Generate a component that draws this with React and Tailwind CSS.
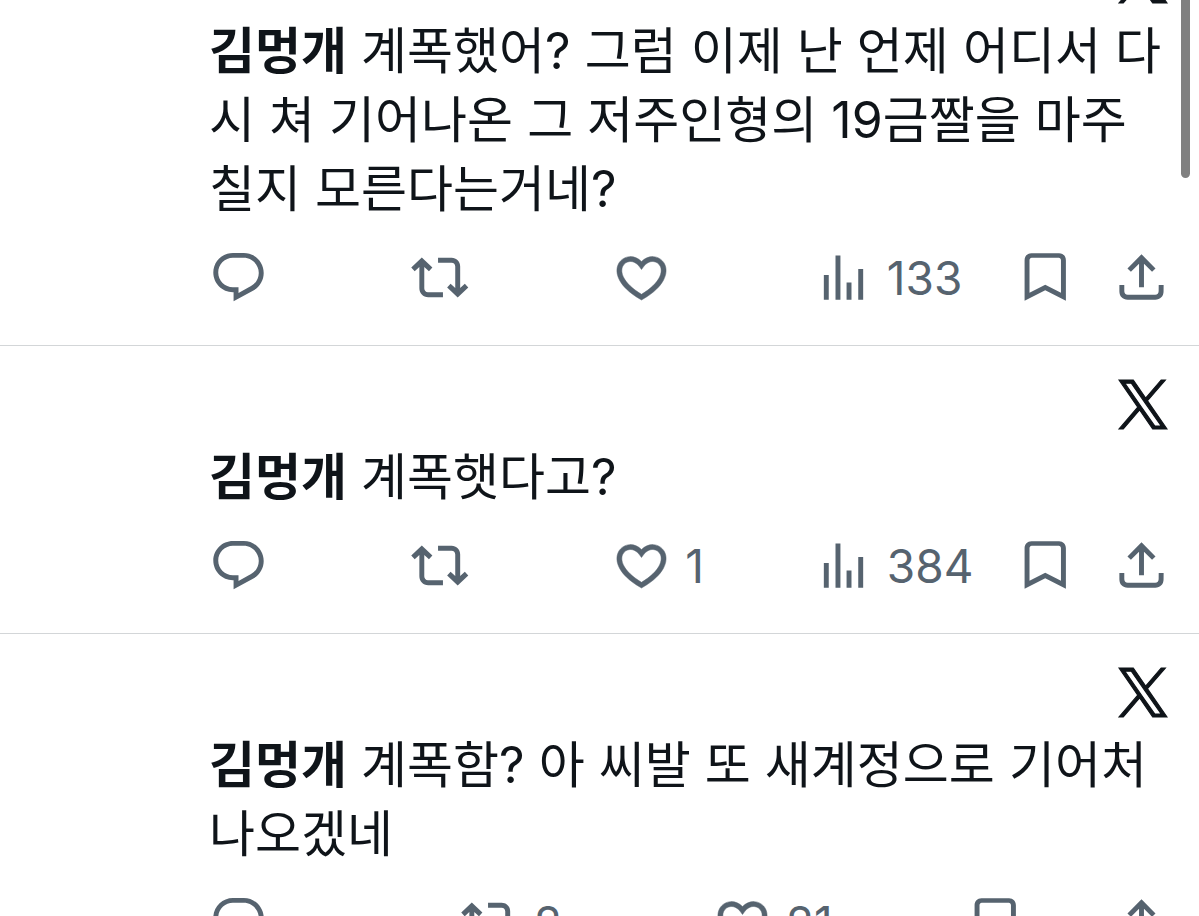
// Thread view -- list of posts with their action bars
import React from "react";

const ICONS = {
  reply: "M1.751 10c0-4.42 3.584-8 8.005-8h4.366c4.49 0 8.129 3.64 8.129 8.13 0 2.96-1.607 5.68-4.196 7.11l-8.054 4.46v-3.69h-.067c-4.49.1-8.183-3.51-8.183-8.01zm8.005-6c-3.317 0-6.005 2.69-6.005 6 0 3.37 2.77 6.08 6.138 6.01l.351-.01h1.761v2.3l5.087-2.81c1.951-1.08 3.163-3.13 3.163-5.36 0-3.39-2.744-6.13-6.129-6.13H9.756z",
  repost: "M4.4 3.88l4.3 4.1-1.4 1.5L5.4 7.7V16.4c0 .9.6 1.6 1.5 1.6H13v2H7c-2.1 0-3.6-1.5-3.6-3.6V7.7L1.5 9.48.1 7.98 4.4 3.88zM16.5 6H11V4h5.5c2 0 3.5 1.5 3.5 3.5v8.8l1.9-1.75 1.4 1.5-4.3 4.1-4.3-4.1 1.4-1.5 1.9 1.75V7.5c0-.9-.6-1.5-1.5-1.5z",
  like: "M16.697 5.5c-1.222-.06-2.679.51-3.89 2.16l-.805 1.09-.806-1.09C9.984 6.01 8.526 5.44 7.304 5.5c-1.243.07-2.349.78-2.91 1.91-.552 1.12-.633 2.78.479 4.82 1.074 1.97 3.257 4.27 7.129 6.61 3.87-2.34 6.052-4.64 7.126-6.61 1.111-2.04 1.03-3.7.477-4.82-.561-1.13-1.666-1.84-2.908-1.91zm4.187 7.69c-1.351 2.48-4.001 5.12-8.379 7.67l-.503.3-.504-.3c-4.379-2.55-7.029-5.19-8.382-7.67-1.36-2.5-1.41-4.86-.514-6.67.887-1.79 2.647-2.91 4.601-3.01 1.651-.09 3.368.56 4.798 2.01 1.429-1.45 3.146-2.1 4.796-2.01 1.954.1 3.714 1.22 4.601 3.01.896 1.81.846 4.17-.514 6.67z",
  views: "M8.75 21V3h2v18h-2zM18 21V8.5h2V21h-2zM4 21l.004-10h2L6 21H4zm9.248 0v-7h2v7h-2z",
  bookmark: "M3.9 21.5V5c0-1.7 1.1-2.9 2.8-2.9h11.2c1.7 0 2.8 1.2 2.8 2.9v16.5l-8.4-4.3-8.4 4.3zM5.9 18.2l6.4-3.3 6.4 3.3V5c0-.6-.4-1-.9-1H6.8c-.5 0-.9.4-.9 1v13.2z",
  share: "M12 2.59l5.7 5.7-1.41 1.42L13 6.41V16h-2V6.41l-3.3 3.3-1.41-1.42L12 2.59zM21 15l-.02 2.6c0 2.1-1.32 3.4-3.4 3.4H6.4C4.31 21 3 19.7 3 17.6V15h2v2.5c0 .9.5 1.5 1.4 1.5h11.18c.9 0 1.4-.6 1.4-1.5L19 15h2z",
};

const posts = [
  { id: 1, text: "계폭했어? 그럼 이제 난 언제 어디서 다시 쳐 기어나온 그 저주인형의 19금짤을 마주칠지 모른다는거네?", views: 133 },
  { id: 2, text: "계폭햇다고?", likes: 1, views: 384 },
  { id: 3, text: "계폭함? 아 씨발 또 새계정으로 기어처나오겠네", reposts: 2, likes: 21 },
];

const Action = ({ icon, label, count, className }) => (
  <div className={`flex ${className}`}>
    <button type="button" aria-label={label} className="flex items-center gap-3.5">
      <svg viewBox="0 0 24 24" className="size-[59px] shrink-0" fill="currentColor" fillRule="evenodd"
        stroke="currentColor" strokeWidth={icon === "like" ? 0.2 : 0} aria-hidden="true">
        <path d={ICONS[icon]} />
      </svg>
      {count && <span className="text-[46px] leading-none">{count}</span>}
    </button>
  </div>
);

const XLogo = () => (
  <svg viewBox="0 0 1200 1227" className="h-[49px] w-12 overflow-visible" fill="currentColor" stroke="currentColor" strokeWidth="28" aria-hidden="true">
    <path d="M714.163 519.284L1160.89 0H1055.03L667.137 450.887L357.328 0H0L468.492 681.821L0 1226.37H105.866L515.491 750.218L842.672 1226.37H1200L714.137 519.284H714.163ZM569.165 687.828L521.697 619.934L144.011 79.6944H306.615L611.412 515.685L658.88 583.579L1055.08 1150.3H892.476L569.165 687.854V687.828Z" />
  </svg>
);

const Post = ({ post }) => (
  <article className="border-b border-[#d3d6d8] pt-[34px] pr-7 pb-[38px] pl-[209px]">
    <div className="flex justify-end pr-1">
      <XLogo />
    </div>
    <p className="mt-3.5 text-[50px] leading-[69px] break-all">
      <strong className="font-bold">김멍개</strong> {post.text}
    </p>
    <div className="mt-6 flex text-[#56636f]">
      <Action icon="reply" label="Reply" className="grow basis-[105px]" />
      <Action icon="repost" label="Repost" count={post.reposts} className="grow basis-[105px]" />
      <Action icon="like" label="Like" count={post.likes} className="grow basis-[105px]" />
      {post.views && <Action icon="views" label="Views" count={post.views} className="grow basis-[105px]" />}
      <Action icon="bookmark" label="Bookmark" className="grow basis-0" />
      <Action icon="share" label="Share" className="shrink-0" />
    </div>
  </article>
);

export default function App() {
  return (
    <main className="relative h-screen overflow-hidden bg-white font-[Inter,'Noto_Sans_CJK_KR',sans-serif] text-[#0f1419]" lang="ko">
      <div className="-mt-20">
        {posts.map(post => <Post key={post.id} post={post} />)}
      </div>
      {/* scroll thumb */}
      <div className="absolute top-0 right-[9px] h-[178px] w-[9px] rounded-b-full bg-[#808080]" />
    </main>
  );
}
